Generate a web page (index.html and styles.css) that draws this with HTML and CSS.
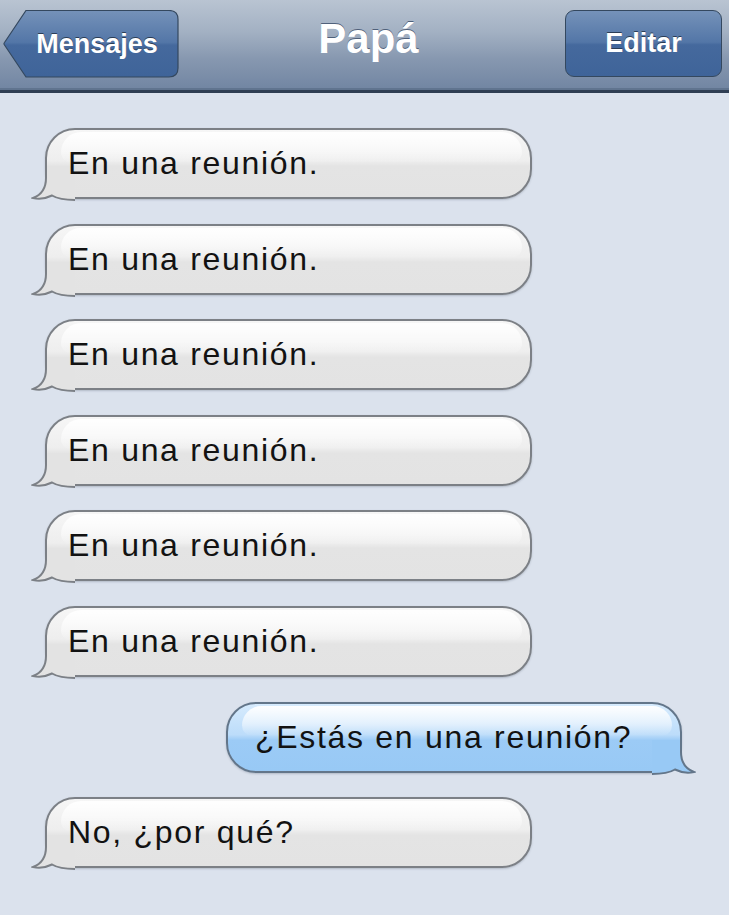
FILE: index.html
```html
<!DOCTYPE html>
<html lang="es">
<head>
<meta charset="utf-8">
<title>Papá</title>
<link rel="stylesheet" href="styles.css">
</head>
<body>
<header class="navbar">
  <a class="back-btn">
    <svg class="back-shape" width="176" height="68" viewBox="0 0 176 68">
      <defs>
        <linearGradient id="bg" x1="0" y1="0" x2="0" y2="1">
          <stop offset="0" stop-color="#7592b9"/>
          <stop offset="0.48" stop-color="#5376a7"/>
          <stop offset="0.52" stop-color="#45699d"/>
          <stop offset="1" stop-color="#3f6499"/>
        </linearGradient>
      </defs>
      <path d="M23 0.5 H166 Q175 0.5 175 9.5 V58 Q175 67 166 67 H23 L1.5 35 Q0.5 33.75 1.5 32.5 Z" fill="url(#bg)" stroke="#34485f" stroke-width="1.2"/>
    </svg>
    <span class="btn-label">Mensajes</span>
  </a>
  <h1 class="title">Papá</h1>
  <a class="edit-btn"><span class="btn-label">Editar</span></a>
</header>

<main class="thread">
  <div class="bubble in"><span class="txt">En una reunión.</span><svg class="tail" width="44" height="36" viewBox="0 0 44 36"><path d="M15 0 V12 C15 22 10 29 2 32 C9 33.5 16 32 21 29.5 C27 33 34 34 44 34 V0 Z" fill="#e3e3e3"/><path d="M15 0 V12 C15 22 10 29 2 32 C9 33.5 16 32 21 29.5 C27 33 34 34 44 34" fill="none" stroke="#7c8086" stroke-width="2"/></svg></div>
  <div class="bubble in"><span class="txt">En una reunión.</span><svg class="tail" width="44" height="36" viewBox="0 0 44 36"><path d="M15 0 V12 C15 22 10 29 2 32 C9 33.5 16 32 21 29.5 C27 33 34 34 44 34 V0 Z" fill="#e3e3e3"/><path d="M15 0 V12 C15 22 10 29 2 32 C9 33.5 16 32 21 29.5 C27 33 34 34 44 34" fill="none" stroke="#7c8086" stroke-width="2"/></svg></div>
  <div class="bubble in"><span class="txt">En una reunión.</span><svg class="tail" width="44" height="36" viewBox="0 0 44 36"><path d="M15 0 V12 C15 22 10 29 2 32 C9 33.5 16 32 21 29.5 C27 33 34 34 44 34 V0 Z" fill="#e3e3e3"/><path d="M15 0 V12 C15 22 10 29 2 32 C9 33.5 16 32 21 29.5 C27 33 34 34 44 34" fill="none" stroke="#7c8086" stroke-width="2"/></svg></div>
  <div class="bubble in"><span class="txt">En una reunión.</span><svg class="tail" width="44" height="36" viewBox="0 0 44 36"><path d="M15 0 V12 C15 22 10 29 2 32 C9 33.5 16 32 21 29.5 C27 33 34 34 44 34 V0 Z" fill="#e3e3e3"/><path d="M15 0 V12 C15 22 10 29 2 32 C9 33.5 16 32 21 29.5 C27 33 34 34 44 34" fill="none" stroke="#7c8086" stroke-width="2"/></svg></div>
  <div class="bubble in"><span class="txt">En una reunión.</span><svg class="tail" width="44" height="36" viewBox="0 0 44 36"><path d="M15 0 V12 C15 22 10 29 2 32 C9 33.5 16 32 21 29.5 C27 33 34 34 44 34 V0 Z" fill="#e3e3e3"/><path d="M15 0 V12 C15 22 10 29 2 32 C9 33.5 16 32 21 29.5 C27 33 34 34 44 34" fill="none" stroke="#7c8086" stroke-width="2"/></svg></div>
  <div class="bubble in"><span class="txt">En una reunión.</span><svg class="tail" width="44" height="36" viewBox="0 0 44 36"><path d="M15 0 V12 C15 22 10 29 2 32 C9 33.5 16 32 21 29.5 C27 33 34 34 44 34 V0 Z" fill="#e3e3e3"/><path d="M15 0 V12 C15 22 10 29 2 32 C9 33.5 16 32 21 29.5 C27 33 34 34 44 34" fill="none" stroke="#7c8086" stroke-width="2"/></svg></div>
  <div class="bubble out"><span class="txt">¿Estás en una reunión?</span><svg class="tail" width="44" height="36" viewBox="0 0 44 36"><path d="M15 0 V12 C15 22 10 29 2 32 C9 33.5 16 32 21 29.5 C27 33 34 34 44 34 V0 Z" fill="#98c9f5"/><path d="M15 0 V12 C15 22 10 29 2 32 C9 33.5 16 32 21 29.5 C27 33 34 34 44 34" fill="none" stroke="#63768a" stroke-width="2"/></svg></div>
  <div class="bubble in"><span class="txt">No, ¿por qué?</span><svg class="tail" width="44" height="36" viewBox="0 0 44 36"><path d="M15 0 V12 C15 22 10 29 2 32 C9 33.5 16 32 21 29.5 C27 33 34 34 44 34 V0 Z" fill="#e3e3e3"/><path d="M15 0 V12 C15 22 10 29 2 32 C9 33.5 16 32 21 29.5 C27 33 34 34 44 34" fill="none" stroke="#7c8086" stroke-width="2"/></svg></div>
</main>
</body>
</html>
```

FILE: styles.css
```css
html, body {
  margin: 0;
  padding: 0;
}
body {
  background: #dbe2ed;
  font-family: "Liberation Sans", Arial, sans-serif;
  width: 729px;
  height: 915px;
  overflow: hidden;
}

.navbar {
  box-sizing: border-box;
  height: 93px;
  padding: 10px 7px 0 3px;
  display: grid;
  grid-template-columns: 1fr auto 1fr;
  align-items: start;
  background: linear-gradient(to bottom, #b9c4d2 0%, #a3b1c3 35%, #8798b0 65%, #7185a2 100%);
  border-bottom: 3px solid #2f3e53;
  box-shadow: inset 0 -2px 0 #60748f;
}

.back-btn {
  justify-self: start;
  position: relative;
  width: 176px;
  height: 68px;
  box-sizing: border-box;
  padding-left: 12px;
  display: flex;
  align-items: center;
  justify-content: center;
}
.back-shape {
  position: absolute;
  left: 0;
  top: 0;
}

.btn-label {
  position: relative;
  color: #fff;
  font-weight: bold;
  font-size: 27px;
  text-shadow: 0 -1px 0 #2b3d56;
}

.edit-btn {
  justify-self: end;
  box-sizing: border-box;
  width: 157px;
  height: 67px;
  border: 1px solid #34485f;
  border-radius: 9px;
  background: linear-gradient(to bottom, #7592b9 0%, #5376a7 48%, #45699d 52%, #3f6499 100%);
  display: flex;
  align-items: center;
  justify-content: center;
}

.title {
  margin: 5px 0 0 12px;
  color: #fff;
  font-size: 42px;
  line-height: 48px;
  font-weight: bold;
  text-shadow: 0 -1px 0 #4f607a;
}

.thread {
  display: flex;
  flex-direction: column;
  gap: 24.6px;
  padding-top: 35px;
}

.bubble {
  position: relative;
  box-sizing: border-box;
  height: 71px;
  border: 2px solid #7c8086;
  border-radius: 30px;
  display: flex;
  align-items: center;
  font-size: 32px;
  letter-spacing: 1.7px;
  color: #121212;
  box-shadow: 0 1px 2px rgba(60, 70, 90, 0.25);
}
.bubble::before {
  content: "";
  position: absolute;
  top: 2px;
  left: 14px;
  right: 8px;
  height: 46%;
  border-radius: 26px 26px 14px 14px;
  background: linear-gradient(to bottom, rgba(255,255,255,0.95), rgba(255,255,255,0.5) 60%, rgba(255,255,255,0));
}
.txt {
  position: relative;
  z-index: 1;
}

.bubble.in {
  margin-left: 45px;
  width: 487px;
  padding-left: 21px;
  background: linear-gradient(to bottom, #f6f6f6 0%, #eeeeee 46%, #e4e4e4 54%, #e3e3e3 100%);
}
.bubble.out {
  margin-left: 226px;
  width: 456px;
  padding-left: 27px;
  border-color: #63768a;
  background: linear-gradient(to bottom, #d6ebfd 0%, #bcdcfa 46%, #9ccbf6 54%, #98c9f5 100%);
}

.tail {
  position: absolute;
  top: 36px;
  left: -16px;
}
.bubble.out .tail {
  left: auto;
  right: -16px;
  transform: scaleX(-1);
}
```
